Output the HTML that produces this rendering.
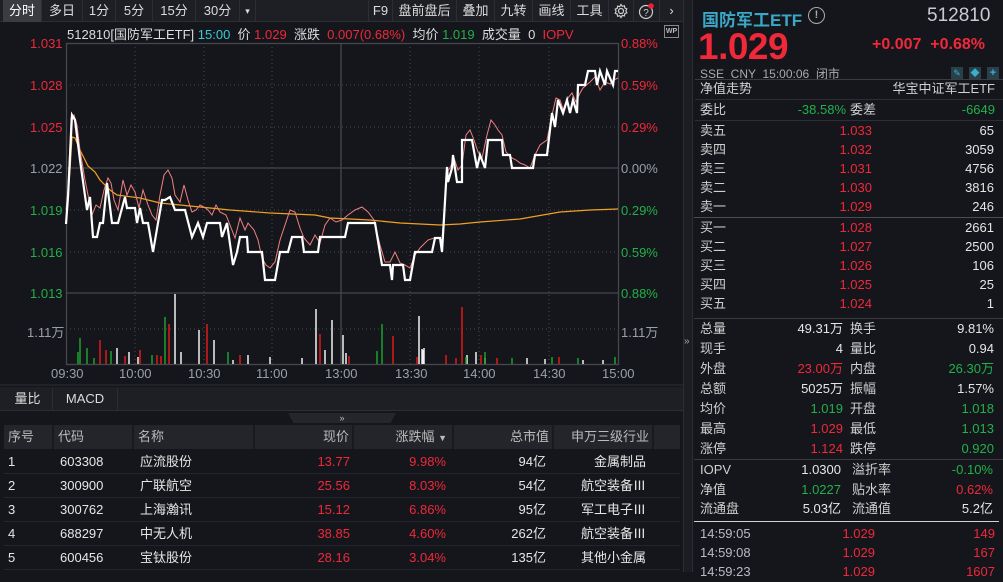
<!DOCTYPE html>
<html><head><meta charset="utf-8"><style>
*{margin:0;padding:0;box-sizing:border-box}
body{width:1003px;height:572px;overflow:hidden;background:#14161b;font-family:"Liberation Sans","Noto Sans CJK SC",sans-serif;color:#d0d0d0;position:relative;font-size:13px}
.a{position:absolute;white-space:nowrap}
.r{color:#f0283a}.g{color:#22b04a}.w{color:#e6e6e6}.gy{color:#9aa0a8}
.tb{position:absolute;top:0;height:22px;background:#1d1f24;border-bottom:1px solid #2c2e33}
.tab{position:absolute;top:0;height:22px;line-height:22px;font-size:13px;color:#dcdcdc;text-align:center;border-right:1px solid #2c2e33}
.rr{position:absolute;left:693px;width:310px;height:20px;font-size:13px;line-height:20px}
.rr span{position:absolute}
.tr{position:absolute;left:4px;width:676px;height:24px;line-height:24px;font-size:13px;border-bottom:1px solid #24262b}
.tr span{position:absolute}
</style></head><body>
<!-- toolbar -->
<div class="tb" style="left:0;width:683px"></div>
<div class="tab" style="left:3px;width:39px;background:#3a3c42;color:#fff">分时</div>
<div class="tab" style="left:42px;width:41px">多日</div>
<div class="tab" style="left:83px;width:33px">1分</div>
<div class="tab" style="left:116px;width:37px">5分</div>
<div class="tab" style="left:153px;width:43px">15分</div>
<div class="tab" style="left:196px;width:44px">30分</div>
<div class="tab" style="left:240px;width:16px;font-size:9px">▾</div>
<div class="tab" style="left:368px;width:25px;border-left:1px solid #2c2e33">F9</div>
<div class="tab" style="left:393px;width:64px">盘前盘后</div>
<div class="tab" style="left:457px;width:38px">叠加</div>
<div class="tab" style="left:495px;width:38px">九转</div>
<div class="tab" style="left:533px;width:38px">画线</div>
<div class="tab" style="left:571px;width:38px">工具</div>
<div class="tab" style="left:609px;width:25px"><svg width="16" height="16" viewBox="0 0 16 16" style="margin-top:3px"><circle cx="8" cy="8" r="2.5" fill="none" stroke="#ccc" stroke-width="1.3"/><path d="M8 1.5l1.3 1.8 2.1-.6.4 2.2 2 .9-.9 2 .9 2-2 .9-.4 2.2-2.1-.6L8 14.5l-1.3-1.8-2.1.6-.4-2.2-2-.9.9-2-.9-2 2-.9.4-2.2 2.1.6z" fill="none" stroke="#ccc" stroke-width="1.2"/></svg></div>
<div class="tab" style="left:634px;width:26px"><svg width="18" height="18" viewBox="0 0 18 18" style="margin-top:2px"><circle cx="8" cy="10" r="6.5" fill="none" stroke="#ccc" stroke-width="1.2"/><text x="8" y="14" font-size="10" fill="#ccc" text-anchor="middle" font-family="Liberation Sans">?</text><circle cx="13" cy="4" r="2.8" fill="#f02030"/></svg></div>
<div class="tab" style="left:660px;width:23px;border:none">›</div>
<!-- info line -->
<div class="a" style="left:67px;top:24px;font-size:13px;color:#ddd">512810[国防军工ETF] <span style="color:#38c8d8">15:00</span> &nbsp;价 <span class="r">1.029</span> &nbsp;涨跌 &nbsp;<span class="r">0.007(0.68%)</span> &nbsp;均价 <span class="g">1.019</span> &nbsp;成交量 &nbsp;0 &nbsp;<span class="r">IOPV</span></div>
<div class="a" style="left:664px;top:25px;width:15px;height:13px;border:1px solid #888;font-size:7px;color:#bbb;text-align:center;line-height:11px;font-weight:bold">WP</div>
<!-- chart -->
<svg class="a" style="left:0;top:0" width="683" height="410">
<g stroke="#4a4c52" stroke-dasharray="1,3" stroke-width="1">
<line x1="66" y1="85" x2="618" y2="85"/><line x1="66" y1="127" x2="618" y2="127"/><line x1="66" y1="210" x2="618" y2="210"/><line x1="66" y1="252" x2="618" y2="252"/><line x1="66" y1="329" x2="618" y2="329"/>
<line x1="135" y1="43" x2="135" y2="364"/><line x1="204" y1="43" x2="204" y2="364"/><line x1="272" y1="43" x2="272" y2="364"/><line x1="410" y1="43" x2="410" y2="364"/><line x1="479" y1="43" x2="479" y2="364"/><line x1="549" y1="43" x2="549" y2="364"/>
</g>
<g stroke="#45474d" stroke-width="1.3" fill="none">
<rect x="66.5" y="43.5" width="552" height="321"/>
<line x1="66" y1="168" x2="618" y2="168"/><line x1="66" y1="293" x2="618" y2="293"/><line x1="341" y1="43" x2="341" y2="364"/>
</g>
<line x1="0" y1="385" x2="683" y2="385" stroke="#2c2e33"/>
<g stroke-width="1.5">
<g stroke="#f0f0f0">
<line x1="175" y1="364" x2="175" y2="294"/><line x1="199" y1="364" x2="199" y2="330"/><line x1="214" y1="364" x2="214" y2="340"/><line x1="316" y1="364" x2="316" y2="309"/><line x1="332" y1="364" x2="332" y2="320"/><line x1="343" y1="364" x2="343" y2="335"/><line x1="419" y1="364" x2="419" y2="316"/><line x1="424" y1="364" x2="424" y2="348"/><line x1="117" y1="364" x2="117" y2="348"/><line x1="129" y1="364" x2="129" y2="352"/><line x1="181" y1="364" x2="181" y2="352"/><line x1="248" y1="364" x2="248" y2="355"/><line x1="270" y1="364" x2="270" y2="357"/><line x1="302" y1="364" x2="302" y2="358"/><line x1="325" y1="364" x2="325" y2="350"/><line x1="346" y1="364" x2="346" y2="353"/><line x1="423" y1="364" x2="423" y2="350"/><line x1="467" y1="364" x2="467" y2="355"/><line x1="476" y1="364" x2="476" y2="352"/><line x1="485" y1="364" x2="485" y2="358"/><line x1="527" y1="364" x2="527" y2="358"/><line x1="545" y1="364" x2="545" y2="359"/><line x1="583" y1="364" x2="583" y2="360"/><line x1="603" y1="364" x2="603" y2="360"/><line x1="422" y1="364" x2="422" y2="349"/><line x1="138" y1="364" x2="138" y2="357"/><line x1="233" y1="364" x2="233" y2="360"/>
</g>
<g stroke="#e01818">
<line x1="169" y1="364" x2="169" y2="324"/><line x1="207" y1="364" x2="207" y2="324"/><line x1="320" y1="364" x2="320" y2="334"/><line x1="393" y1="364" x2="393" y2="336"/><line x1="462" y1="364" x2="462" y2="307"/><line x1="100" y1="364" x2="100" y2="340"/><line x1="106" y1="364" x2="106" y2="350"/><line x1="140" y1="364" x2="140" y2="350"/><line x1="157" y1="364" x2="157" y2="355"/><line x1="161" y1="364" x2="161" y2="356"/><line x1="240" y1="364" x2="240" y2="355"/><line x1="349" y1="364" x2="349" y2="356"/><line x1="417" y1="364" x2="417" y2="357"/><line x1="446" y1="364" x2="446" y2="355"/><line x1="456" y1="364" x2="456" y2="358"/><line x1="481" y1="364" x2="481" y2="355"/><line x1="497" y1="364" x2="497" y2="358"/><line x1="559" y1="364" x2="559" y2="357"/><line x1="125" y1="364" x2="125" y2="356"/>
</g>
<g stroke="#1aa02c">
<line x1="165" y1="364" x2="165" y2="317"/><line x1="80" y1="364" x2="80" y2="338"/><line x1="78" y1="364" x2="78" y2="352"/><line x1="87" y1="364" x2="87" y2="348"/><line x1="111" y1="364" x2="111" y2="351"/><line x1="152" y1="364" x2="152" y2="355"/><line x1="228" y1="364" x2="228" y2="352"/><line x1="382" y1="364" x2="382" y2="324"/><line x1="377" y1="364" x2="377" y2="351"/><line x1="485" y1="364" x2="485" y2="352"/><line x1="466" y1="364" x2="466" y2="357"/><line x1="512" y1="364" x2="512" y2="358"/><line x1="552" y1="364" x2="552" y2="357"/><line x1="578" y1="364" x2="578" y2="358"/><line x1="615" y1="364" x2="615" y2="357"/><line x1="94" y1="364" x2="94" y2="358"/>
</g>
</g>
<polyline fill="none" stroke="#f2a020" stroke-width="1.2" points="66,224 70,170 72,137 75,138 80,150 88,166 95,172 100,180 110,190 117,195 140,198 160,203 200,207 230,210 270,213 315,215 330,218 370,220 400,223 440,225 460,224 480,222 520,219 560,212 590,210 618,209"/>
<polyline fill="none" stroke="#f08080" stroke-width="1" points="66,210 68,190 71,118 74,115 77,125 80,150 85,180 88,195 92,215 96,205 100,208 104,190 108,178 111,183 114,200 118,210 123,180 127,195 131,185 135,192 139,208 143,190 148,205 152,215 156,220 160,195 164,175 168,170 172,178 175,195 180,202 184,185 188,200 192,212 196,210 200,205 204,207 208,210 212,215 216,205 220,212 226,215 230,225 235,238 240,218 245,230 248,223 254,230 258,240 262,258 266,265 270,268 275,262 280,240 285,225 290,210 295,212 300,228 304,238 310,245 315,235 320,243 325,225 330,218 336,222 342,220 348,215 355,210 362,207 368,212 374,220 380,245 385,262 390,262 395,252 400,263 405,265 410,268 415,255 420,248 428,240 434,238 438,238 442,240 447,172 450,168 454,158 458,170 462,165 466,135 470,130 474,140 478,152 482,158 487,135 491,120 495,125 498,130 502,135 506,152 512,158 516,160 520,163 525,165 530,168 535,155 540,145 547,140 552,115 556,98 560,100 564,112 568,98 572,93 576,102 580,93 583,88 590,82 595,77 600,90 605,82 610,84 614,80 618,78"/>
<polyline fill="none" stroke="#ffffff" stroke-width="2.2" points="66,224 68,197 72,115 75,120 80,160 87,210 90,197 93,237 97,237 100,223 103,223 107,183 112,223 118,223 125,197 127,208 135,208 137,223 140,208 143,223 148,223 153,252 158,223 162,200 165,200 170,197 175,210 185,210 192,237 198,223 203,237 207,223 220,223 222,237 227,223 233,265 237,252 240,237 247,237 248,252 262,252 265,280 275,280 280,252 288,252 292,237 302,237 304,252 318,252 320,237 345,237 348,223 375,223 382,265 390,265 392,280 393,265 403,265 405,280 410,280 415,252 432,252 435,238 440,238 442,252 447,167 448,182 452,168 453,155 457,182 462,182 462,140 472,140 477,168 480,155 485,168 488,140 502,140 503,155 510,155 512,168 533,168 535,155 547,155 552,113 555,127 558,100 563,113 567,100 570,113 573,100 577,113 578,85 585,85 588,71 595,71 597,85 600,71 605,85 607,71 613,85 615,71 618,71"/>
</svg>
<!-- axis labels -->
<div class="a r" style="left:30px;top:36px;font-size:13px">1.031</div>
<div class="a r" style="left:30px;top:78px">1.028</div>
<div class="a r" style="left:30px;top:120px">1.025</div>
<div class="a gy" style="left:30px;top:161px">1.022</div>
<div class="a g" style="left:30px;top:203px">1.019</div>
<div class="a g" style="left:30px;top:245px">1.016</div>
<div class="a g" style="left:30px;top:286px">1.013</div>
<div class="a gy" style="left:27px;top:322px">1.11万</div>
<div class="a r" style="left:621px;top:36px">0.88%</div>
<div class="a r" style="left:621px;top:78px">0.59%</div>
<div class="a r" style="left:621px;top:120px">0.29%</div>
<div class="a gy" style="left:621px;top:161px">0.00%</div>
<div class="a g" style="left:621px;top:203px">0.29%</div>
<div class="a g" style="left:621px;top:245px">0.59%</div>
<div class="a g" style="left:621px;top:286px">0.88%</div>
<div class="a gy" style="left:621px;top:322px">1.11万</div>
<div class="a gy" style="left:51px;top:366px">09:30</div>
<div class="a gy" style="left:119px;top:366px">10:00</div>
<div class="a gy" style="left:188px;top:366px">10:30</div>
<div class="a gy" style="left:256px;top:366px">11:00</div>
<div class="a gy" style="left:325px;top:366px">13:00</div>
<div class="a gy" style="left:395px;top:366px">13:30</div>
<div class="a gy" style="left:463px;top:366px">14:00</div>
<div class="a gy" style="left:533px;top:366px">14:30</div>
<div class="a gy" style="left:602px;top:366px">15:00</div>
<!-- indicator tabs -->
<div class="a" style="left:0;top:387px;width:683px;height:24px;background:#1d1f24;border-bottom:1px solid #2c2e33"></div>
<div class="tab" style="left:3px;top:388px;width:50px;height:22px">量比</div>
<div class="tab" style="left:53px;top:388px;width:65px;height:22px">MACD</div>
<div class="a" style="left:288px;top:413px;width:108px;height:10px;background:#24262b;text-align:center;font-size:9px;line-height:10px;color:#bbb;clip-path:polygon(0 0,100% 0,95% 100%,5% 100%)">»</div>
<!-- table -->
<div class="a" style="left:4px;top:425px;width:676px;height:24px;background:#23252a"></div>
<div class="tr" style="top:425px;color:#bbb;border:none"><span style="left:4px">序号</span><span style="left:54px">代码</span><span style="left:134px">名称</span><span style="right:331px">现价</span><span style="right:233px">涨跌幅 <small style="font-size:9px">▼</small></span><span style="right:131px">总市值</span><span style="right:31px">申万三级行业</span></div>
<svg class="a" style="left:4px;top:425px" width="676" height="24"><g stroke="#14161b" stroke-width="1.5"><line x1="49" y1="0" x2="49" y2="24"/><line x1="129" y1="0" x2="129" y2="24"/><line x1="250" y1="0" x2="250" y2="24"/><line x1="349" y1="0" x2="349" y2="24"/><line x1="449" y1="0" x2="449" y2="24"/><line x1="549" y1="0" x2="549" y2="24"/><line x1="649" y1="0" x2="649" y2="24"/></g></svg>
<div class="tr w" style="top:450px"><span style="left:4px">1</span><span style="left:56px">603308</span><span style="left:136px">应流股份</span><span class="r" style="right:330px">13.77</span><span class="r" style="right:234px">9.98%</span><span style="right:134px">94亿</span><span style="right:34px">金属制品</span></div>
<div class="tr w" style="top:474px"><span style="left:4px">2</span><span style="left:56px">300900</span><span style="left:136px">广联航空</span><span class="r" style="right:330px">25.56</span><span class="r" style="right:234px">8.03%</span><span style="right:134px">54亿</span><span style="right:34px">航空装备Ⅲ</span></div>
<div class="tr w" style="top:498px"><span style="left:4px">3</span><span style="left:56px">300762</span><span style="left:136px">上海瀚讯</span><span class="r" style="right:330px">15.12</span><span class="r" style="right:234px">6.86%</span><span style="right:134px">95亿</span><span style="right:34px">军工电子Ⅲ</span></div>
<div class="tr w" style="top:522px"><span style="left:4px">4</span><span style="left:56px">688297</span><span style="left:136px">中无人机</span><span class="r" style="right:330px">38.85</span><span class="r" style="right:234px">4.60%</span><span style="right:134px">262亿</span><span style="right:34px">航空装备Ⅲ</span></div>
<div class="tr w" style="top:546px"><span style="left:4px">5</span><span style="left:56px">600456</span><span style="left:136px">宝钛股份</span><span class="r" style="right:330px">28.16</span><span class="r" style="right:234px">3.04%</span><span style="right:134px">135亿</span><span style="right:34px">其他小金属</span></div>
<!-- divider -->
<div class="a" style="left:683px;top:0;width:10px;height:572px;background:#1b1d22;border-left:1px solid #2c2e33;border-right:1px solid #2c2e33"></div>
<div class="a" style="left:684px;top:336px;font-size:10px;color:#aaa">»</div>
<!-- right panel -->
<div class="a" style="left:702px;top:6px;font-size:17px;font-weight:bold;color:#3aa8c8">国防军工ETF</div>
<div class="a" style="left:808px;top:7px;width:17px;height:17px;border:1.5px solid #aaa;border-radius:50%;color:#aaa;font-size:11px;text-align:center;line-height:14px;font-weight:bold">!</div>
<div class="a" style="left:927px;top:5px;font-size:19px;color:#c8ccd2">512810</div>
<div class="a r" style="left:698px;top:26px;font-size:37px;font-weight:bold;letter-spacing:-0.5px">1.029</div>
<div class="a r" style="left:872px;top:36px;font-size:16px;font-weight:bold">+0.007 &nbsp;+0.68%</div>
<div class="a gy" style="left:700px;top:65px;font-size:12px;color:#aaa">SSE &nbsp;CNY &nbsp;15:00:06 &nbsp;闭市</div>
<div class="a" style="left:951px;top:67px;width:12px;height:12px;background:#2a4048;color:#3ab0d0;font-size:9px;text-align:center;line-height:12px">✎</div>
<div class="a" style="left:969px;top:67px;width:12px;height:12px;background:#2a4048;color:#3ab0d0;font-size:9px;text-align:center;line-height:12px">◆</div>
<div class="a" style="left:987px;top:67px;width:12px;height:12px;background:#2a4048;color:#3ab0d0;font-size:11px;text-align:center;line-height:12px;font-weight:bold">+</div>
<div class="a" style="left:695px;top:79px;width:308px;border-top:1px solid #3a3c42"></div>
<div class="rr" style="top:79px"><span style="left:7px">净值走势</span><span style="right:8px">华宝中证军工ETF</span></div>
<div class="a" style="left:695px;top:99px;width:308px;border-top:1px solid #2c2e33"></div>
<div class="rr" style="top:100px"><span style="left:7px">委比</span><span class="g" style="right:157px">-38.58%</span><span style="left:157px">委差</span><span class="g" style="right:8px">-6649</span></div>
<div class="a" style="left:695px;top:120px;width:308px;border-top:1px solid #2c2e33"></div>
<div class="rr" style="top:121px"><span style="left:7px">卖五</span><span class="r" style="right:131px">1.033</span><span class="w" style="right:9px">65</span></div>
<div class="rr" style="top:140px"><span style="left:7px">卖四</span><span class="r" style="right:131px">1.032</span><span class="w" style="right:9px">3059</span></div>
<div class="rr" style="top:159px"><span style="left:7px">卖三</span><span class="r" style="right:131px">1.031</span><span class="w" style="right:9px">4756</span></div>
<div class="rr" style="top:178px"><span style="left:7px">卖二</span><span class="r" style="right:131px">1.030</span><span class="w" style="right:9px">3816</span></div>
<div class="rr" style="top:197px"><span style="left:7px">卖一</span><span class="r" style="right:131px">1.029</span><span class="w" style="right:9px">246</span></div>
<div class="a" style="left:694px;top:217px;width:309px;border-top:1px solid #4a4c52"></div>
<div class="rr" style="top:218px"><span style="left:7px">买一</span><span class="r" style="right:131px">1.028</span><span class="w" style="right:9px">2661</span></div>
<div class="rr" style="top:237px"><span style="left:7px">买二</span><span class="r" style="right:131px">1.027</span><span class="w" style="right:9px">2500</span></div>
<div class="rr" style="top:256px"><span style="left:7px">买三</span><span class="r" style="right:131px">1.026</span><span class="w" style="right:9px">106</span></div>
<div class="rr" style="top:275px"><span style="left:7px">买四</span><span class="r" style="right:131px">1.025</span><span class="w" style="right:9px">25</span></div>
<div class="rr" style="top:294px"><span style="left:7px">买五</span><span class="r" style="right:131px">1.024</span><span class="w" style="right:9px">1</span></div>
<div class="a" style="left:694px;top:318px;width:309px;border-top:1px solid #3a3c42"></div>
<div class="rr" style="top:319px"><span style="left:7px">总量</span><span class="w" style="right:160px">49.31万</span><span style="left:157px">换手</span><span class="w" style="right:9px">9.81%</span></div>
<div class="rr" style="top:339px"><span style="left:7px">现手</span><span class="w" style="right:160px">4</span><span style="left:157px">量比</span><span class="w" style="right:9px">0.94</span></div>
<div class="rr" style="top:359px"><span style="left:7px">外盘</span><span class="r" style="right:160px">23.00万</span><span style="left:157px">内盘</span><span class="g" style="right:9px">26.30万</span></div>
<div class="rr" style="top:379px"><span style="left:7px">总额</span><span class="w" style="right:160px">5025万</span><span style="left:157px">振幅</span><span class="w" style="right:9px">1.57%</span></div>
<div class="rr" style="top:399px"><span style="left:7px">均价</span><span class="g" style="right:160px">1.019</span><span style="left:157px">开盘</span><span class="g" style="right:9px">1.018</span></div>
<div class="rr" style="top:419px"><span style="left:7px">最高</span><span class="r" style="right:160px">1.029</span><span style="left:157px">最低</span><span class="g" style="right:9px">1.013</span></div>
<div class="rr" style="top:439px"><span style="left:7px">涨停</span><span class="r" style="right:160px">1.124</span><span style="left:157px">跌停</span><span class="g" style="right:9px">0.920</span></div>
<div class="a" style="left:694px;top:459px;width:309px;border-top:1px solid #3a3c42"></div>
<div class="rr" style="top:460px"><span style="left:7px">IOPV</span><span class="w" style="right:162px">1.0300</span><span style="left:159px">溢折率</span><span class="g" style="right:10px">-0.10%</span></div>
<div class="rr" style="top:480px"><span style="left:7px">净值</span><span class="g" style="right:162px">1.0227</span><span style="left:159px">贴水率</span><span class="r" style="right:10px">0.62%</span></div>
<div class="rr" style="top:499px"><span style="left:7px">流通盘</span><span class="w" style="right:162px">5.03亿</span><span style="left:159px">流通值</span><span class="w" style="right:10px">5.2亿</span></div>
<div class="a" style="left:694px;top:521px;width:305px;border-top:1px solid #d0d0d0"></div>
<div class="rr" style="top:524px"><span class="gy" style="left:7px;color:#b8bcc2">14:59:05</span><span class="r" style="right:128px">1.029</span><span class="r" style="right:8px">149</span></div>
<div class="rr" style="top:543px"><span class="gy" style="left:7px;color:#b8bcc2">14:59:08</span><span class="r" style="right:128px">1.029</span><span class="r" style="right:8px">167</span></div>
<div class="rr" style="top:562px"><span class="gy" style="left:7px;color:#b8bcc2">14:59:23</span><span class="r" style="right:128px">1.029</span><span class="r" style="right:8px">1607</span></div>
</body></html>
